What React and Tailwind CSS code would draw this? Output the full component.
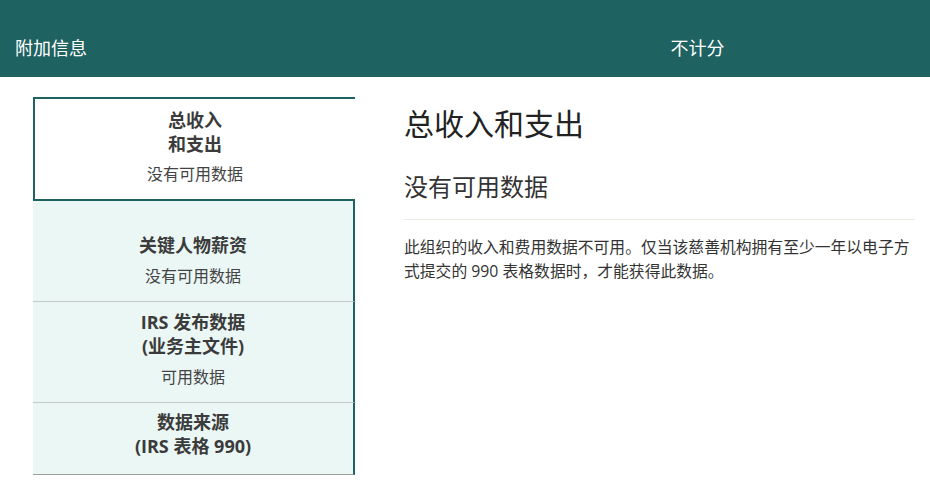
const font = { fontFamily: '"Open Sans", "Noto Sans CJK SC", sans-serif' };

const tabs = [
  { title: ['关键人物薪资'], sub: '没有可用数据', h: 'h-[101px]' },
  { title: ['IRS 发布数据', '(业务主文件)'], sub: '可用数据', h: 'h-[101px]' },
];

function Tab({ title, sub, h }) {
  return (
    <div className={`${h} flex flex-col justify-end items-center pb-[13px] bg-[#ebf7f5] border-b border-[#c5cbca] border-r-2 border-r-[#1f6262]`}>
      <div className="text-[18px] leading-[24px] font-bold text-[#3b3b3b] text-center">
        {title.map((t) => (
          <div key={t}>{t}</div>
        ))}
      </div>
      <div className="mt-[7px] text-[16px] leading-[24px] text-[#444]">{sub}</div>
    </div>
  );
}

export default function App() {
  return (
    <div className="w-[930px] h-[485px] bg-white overflow-hidden" style={font}>
      {/* header */}
      <div className="h-[77px] bg-[#1f6262] grid grid-cols-2 text-white text-[18px] leading-[24px]">
        <div className="pl-[15px] pt-[36px]">附加信息</div>
        <div className="pt-[36px] text-center">不计分</div>
      </div>

      <div className="flex mt-[20px]">
        {/* tab list */}
        <div className="ml-[33px] w-[322px] flex flex-col">
          <div className="h-[104px] flex flex-col justify-end items-center pb-[13px] border-2 border-r-0 border-[#1f6262] bg-white">
            <div className="text-[18px] leading-[24px] font-bold text-[#3b3b3b] text-center">
              <div>总收入</div>
              <div>和支出</div>
            </div>
            <div className="mt-[6px] text-[16px] leading-[24px] text-[#444]">没有可用数据</div>
          </div>
          {tabs.map((t) => (
            <Tab key={t.sub + t.title[0]} {...t} />
          ))}
          <div className="h-[72px] flex flex-col justify-end items-center pb-[16px] bg-[#ebf7f5] border-b border-[#9a9f9f] border-r-2 border-r-[#1f6262]">
            <div className="text-[18px] leading-[24px] font-bold text-[#3b3b3b] text-center">
              <div>数据来源</div>
              <div>(IRS 表格 990)</div>
            </div>
          </div>
        </div>

        {/* content */}
        <div className="ml-[49px] w-[511px]">
          <h1 className="mt-[7px] text-[30px] leading-[40px] font-normal text-[#222]">总收入和支出</h1>
          <h2 className="mt-[27px] text-[24px] leading-[32px] font-normal text-[#333]">没有可用数据</h2>
          <hr className="mt-[16px] border-0 border-t border-[#eee9e2]" />
          <p className="mt-[15px] text-[15.8px] leading-[24px] text-[#333]">
            此组织的收入和费用数据不可用。仅当该慈善机构拥有至少一年以电子方式提交的 990 表格数据时，才能获得此数据。
          </p>
        </div>
      </div>
    </div>
  );
}
